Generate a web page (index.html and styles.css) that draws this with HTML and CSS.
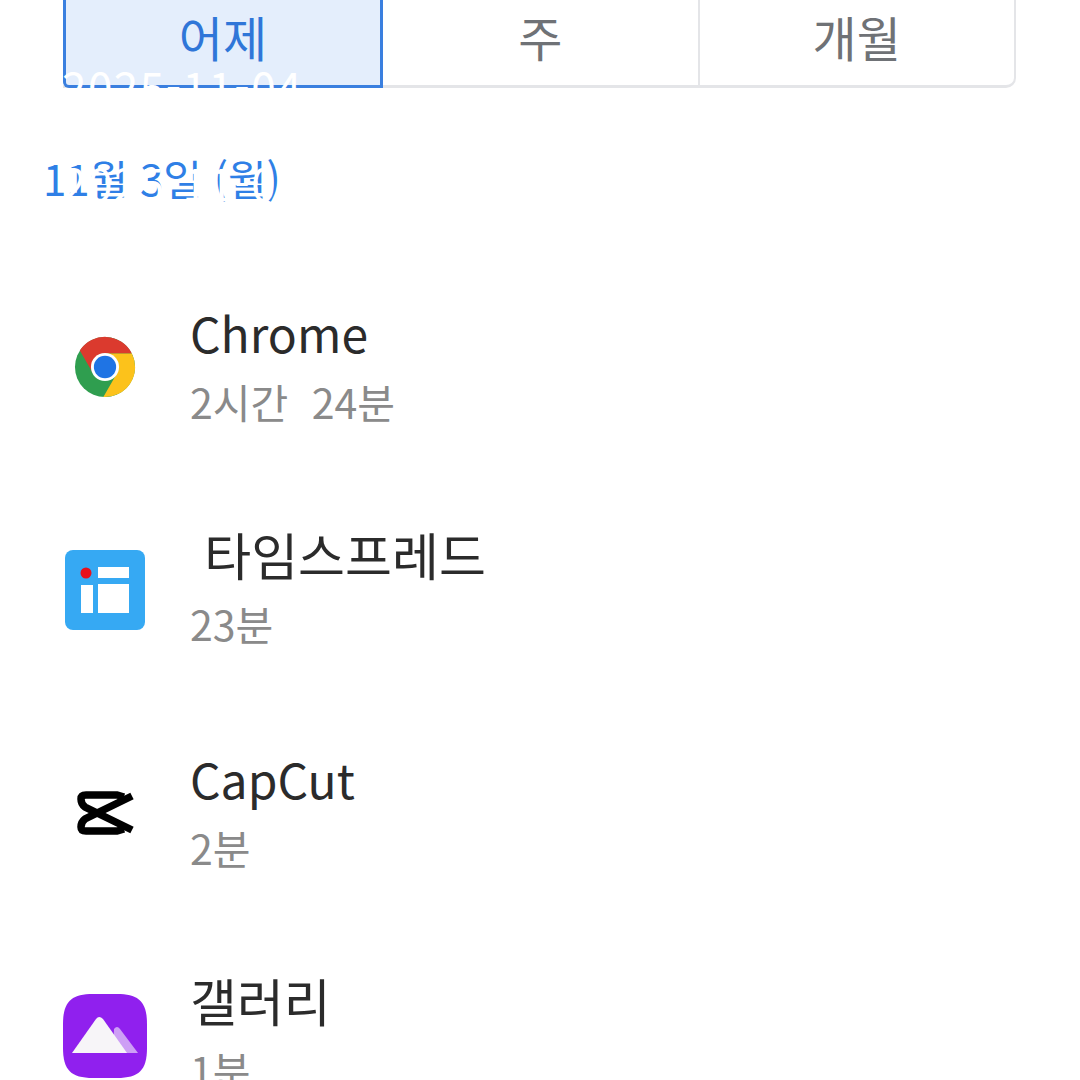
FILE: index.html
```html
<!DOCTYPE html>
<html lang="ko">
<head>
    <meta charset="UTF-8">
    <title>앱 사용 시간</title>
    <link rel="stylesheet" href="styles.css">
</head>
<body>
    <div class="tabs">
        <div class="tab active">어제</div>
        <div class="tab">주</div>
        <div class="tab">개월</div>
    </div>
    <div class="date-over">2025-11-04</div>

    <div class="day-wrap">
        <h2 class="day">11월 3일 (월)</h2>
        <div class="day-over">2025-11-03</div>
    </div>

    <ul class="apps">
        <li class="app">
            <div class="icon">
                <svg width="62" height="62" viewBox="0 0 64 64">
                    <circle cx="32" cy="32" r="31" fill="#2f9e4f"/>
                    <path d="M6 15A31 31 0 0 1 59.7 18H32A14 14 0 0 0 19.9 39Z" fill="#db3a2e"/>
                    <path d="M59.7 18A31 31 0 0 1 30.3 63L44.1 39A14 14 0 0 0 32 18Z" fill="#fcc21b"/>
                    <circle cx="32" cy="32" r="14.5" fill="#fff"/>
                    <circle cx="32" cy="32" r="11.5" fill="#1f74e4"/>
                </svg>
            </div>
            <div class="info">
                <div class="name">Chrome</div>
                <div class="time">2시간 24분</div>
            </div>
        </li>
        <li class="app">
            <div class="icon">
                <svg width="80" height="80" viewBox="0 0 80 80">
                    <rect width="80" height="80" rx="8" fill="#36a9f3"/>
                    <rect x="33" y="17" width="31" height="11" fill="#fff"/>
                    <rect x="33" y="34" width="31" height="29" fill="#fff"/>
                    <rect x="16" y="35" width="12" height="28" fill="#fff"/>
                    <circle cx="21" cy="23" r="5.5" fill="#e8101c"/>
                </svg>
            </div>
            <div class="info">
                <div class="name ko">&nbsp;타임스프레드</div>
                <div class="time">23분</div>
            </div>
        </li>
        <li class="app">
            <div class="icon">
                <svg width="60" height="46" viewBox="0 0 60 46">
                    <path d="M57 6L10 29Q6 32 6 37Q6 41 11 41H42L49 39" fill="none" stroke="#000" stroke-width="7.5"/>
                    <path d="M57 40L10 17Q6 14 6 9Q6 5 11 5H42L49 7" fill="none" stroke="#000" stroke-width="7.5"/>
                </svg>
            </div>
            <div class="info">
                <div class="name">CapCut</div>
                <div class="time">2분</div>
            </div>
        </li>
        <li class="app">
            <div class="icon">
                <svg width="84" height="84" viewBox="0 0 84 84">
                    <path d="M30 0H54C76 0 84 8 84 30V54C84 76 76 84 54 84H30C8 84 0 76 0 54V30C0 8 8 0 30 0Z" fill="#9020ee"/>
                    <path d="M51 35Q54 31 57 35L75 59H50Z" fill="#cd9ff5"/>
                    <path d="M33 25Q36 21 40 25L64 59H9Z" fill="#f7f5f8"/>
                </svg>
            </div>
            <div class="info">
                <div class="name ko">갤러리</div>
                <div class="time">1분</div>
            </div>
        </li>
    </ul>
</body>
</html>
```

FILE: styles.css
```css
body {
    margin: 0;
    height: 1080px;
    overflow: hidden;
    position: relative;
    background-color: #fff;
    font-family: "Noto Sans CJK KR", "Noto Sans", sans-serif;
}
.tabs {
    display: flex;
    margin-left: 63px;
    width: 953px;
    height: 88px;
    box-sizing: border-box;
    border-right: 2px solid #e4e5e8;
    border-bottom: 3px solid #e4e5e8;
    border-bottom-right-radius: 10px;
}
.tab {
    flex: 1;
    display: flex;
    align-items: center;
    justify-content: center;
    padding-bottom: 14px;
    font-size: 48px;
    color: #6f7276;
    border-right: 2px solid #e4e5e8;
}
.tab:last-child {
    border-right: none;
}
.tab.active {
    flex: none;
    width: 320px;
    box-sizing: border-box;
    margin-bottom: -3px;
    color: #2f76d8;
    background-color: #e4eefc;
    border: 3px solid #3a7fdf;
    border-top: none;
    border-bottom-left-radius: 6px;
}
.date-over {
    position: absolute;
    left: 62px;
    top: 54px;
    font-size: 44px;
    color: #fff;
    letter-spacing: 1.5px;
}
.day-wrap {
    position: relative;
    margin: 60px 0 0 43px;
}
.day {
    margin: 0;
    font-size: 42px;
    font-weight: 400;
    line-height: 60px;
    color: #2f7fe6;
}
.day-over {
    position: absolute;
    left: 19px;
    top: 4px;
    font-size: 44px;
    line-height: 60px;
    letter-spacing: 1.5px;
    color: #fff;
}
.apps {
    list-style: none;
    margin: 47px 0 0;
    padding: 0;
}
.app {
    display: flex;
    align-items: center;
    height: 223px;
}
.icon {
    width: 84px;
    margin-left: 63px;
    margin-right: 43px;
    display: flex;
    justify-content: center;
    align-items: center;
}
.icon svg {
    display: block;
}
.name {
    font-size: 48px;
    line-height: 66px;
    color: #2b2b2b;
}
.name.ko {
    font-size: 51px;
    line-height: 60px;
    margin-bottom: 6px;
}
.time {
    margin-top: 3px;
    font-size: 41px;
    line-height: 66px;
    word-spacing: 12px;
    color: #8a8a8a;
}
```
